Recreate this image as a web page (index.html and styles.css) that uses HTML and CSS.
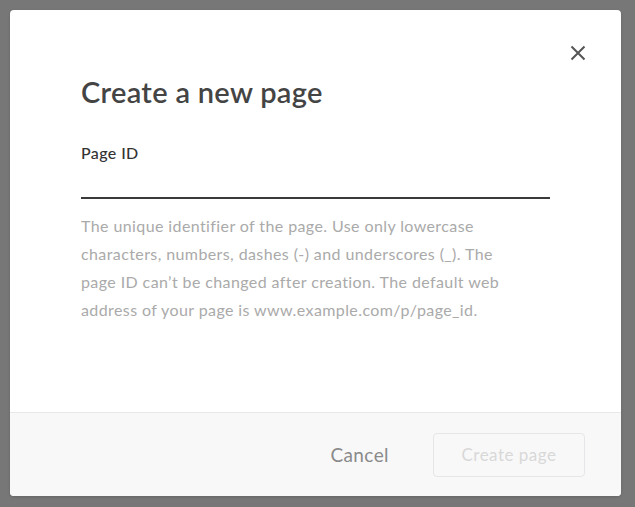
FILE: index.html
```html
<!DOCTYPE html>
<html>
<head>
<meta charset="utf-8">
<link rel="stylesheet" href="styles.css">
</head>
<body>
<div class="modal">
  <div class="modal-body">
    <button class="close" aria-label="Close">
      <svg width="16" height="16" viewBox="0 0 16 16"><path d="M1.5 1.5L14.5 14.5M14.5 1.5L1.5 14.5" stroke="#555" stroke-width="2" fill="none"/></svg>
    </button>
    <h1 class="title">Create a new page</h1>
    <label class="label">Page ID</label>
    <div class="input"></div>
    <p class="help">The unique identifier of the page. Use only lowercase characters, numbers, dashes (-) and underscores (_). The page ID can’t be changed after creation. The default web address of your page is www.example.com/p/page_id.</p>
  </div>
  <div class="modal-footer">
    <span class="cancel">Cancel</span>
    <span class="create">Create page</span>
  </div>
</div>
</body>
</html>
```
FILE: styles.css
```css
html, body { margin: 0; }
body {
  background: #777777;
  padding: 10px 14px 11px 10px;
  font-family: Lato, "Noto Sans", sans-serif;
}
.modal {
  width: 611px;
  height: 486px;
  background: #fff;
  border-radius: 4px;
  display: flex;
  flex-direction: column;
  overflow: hidden;
  box-shadow: 0 1px 3px rgba(0, 0, 0, 0.15);
}
.modal-body {
  flex: 1;
  position: relative;
  padding: 0 71px;
}
.close {
  position: absolute;
  top: 35px;
  right: 35px;
  width: 16px;
  height: 16px;
  padding: 0;
  border: 0;
  background: none;
  display: flex;
}
.title {
  margin: 64px 0 0;
  font-size: 29px;
  line-height: 36px;
  font-weight: 600;
  letter-spacing: 0.3px;
  color: #444;
}
.label {
  display: block;
  margin-top: 33px;
  font-size: 16px;
  line-height: 20px;
  font-weight: 500;
  letter-spacing: 0.4px;
  color: #333;
}
.input {
  margin-top: 34px;
  height: 2px;
  background: #3a3a3a;
}
.help {
  margin: 13px 0 0;
  font-size: 16px;
  line-height: 28px;
  letter-spacing: 0.4px;
  color: #aaa;
  max-width: 440px;
}
.modal-footer {
  height: 83px;
  border-top: 1px solid #e8e8ea;
  background: #f8f8f9;
  display: flex;
  justify-content: flex-end;
  align-items: center;
  gap: 44px;
  padding-right: 36px;
}
.cancel {
  font-size: 19px;
  letter-spacing: 0.4px;
  color: #8a8a8a;
}
.create {
  width: 150px;
  height: 42px;
  border: 1px solid #e6e6e8;
  border-radius: 4px;
  display: flex;
  align-items: center;
  justify-content: center;
  font-size: 17px;
  letter-spacing: 0.5px;
  color: #d8d8d8;
}
```
